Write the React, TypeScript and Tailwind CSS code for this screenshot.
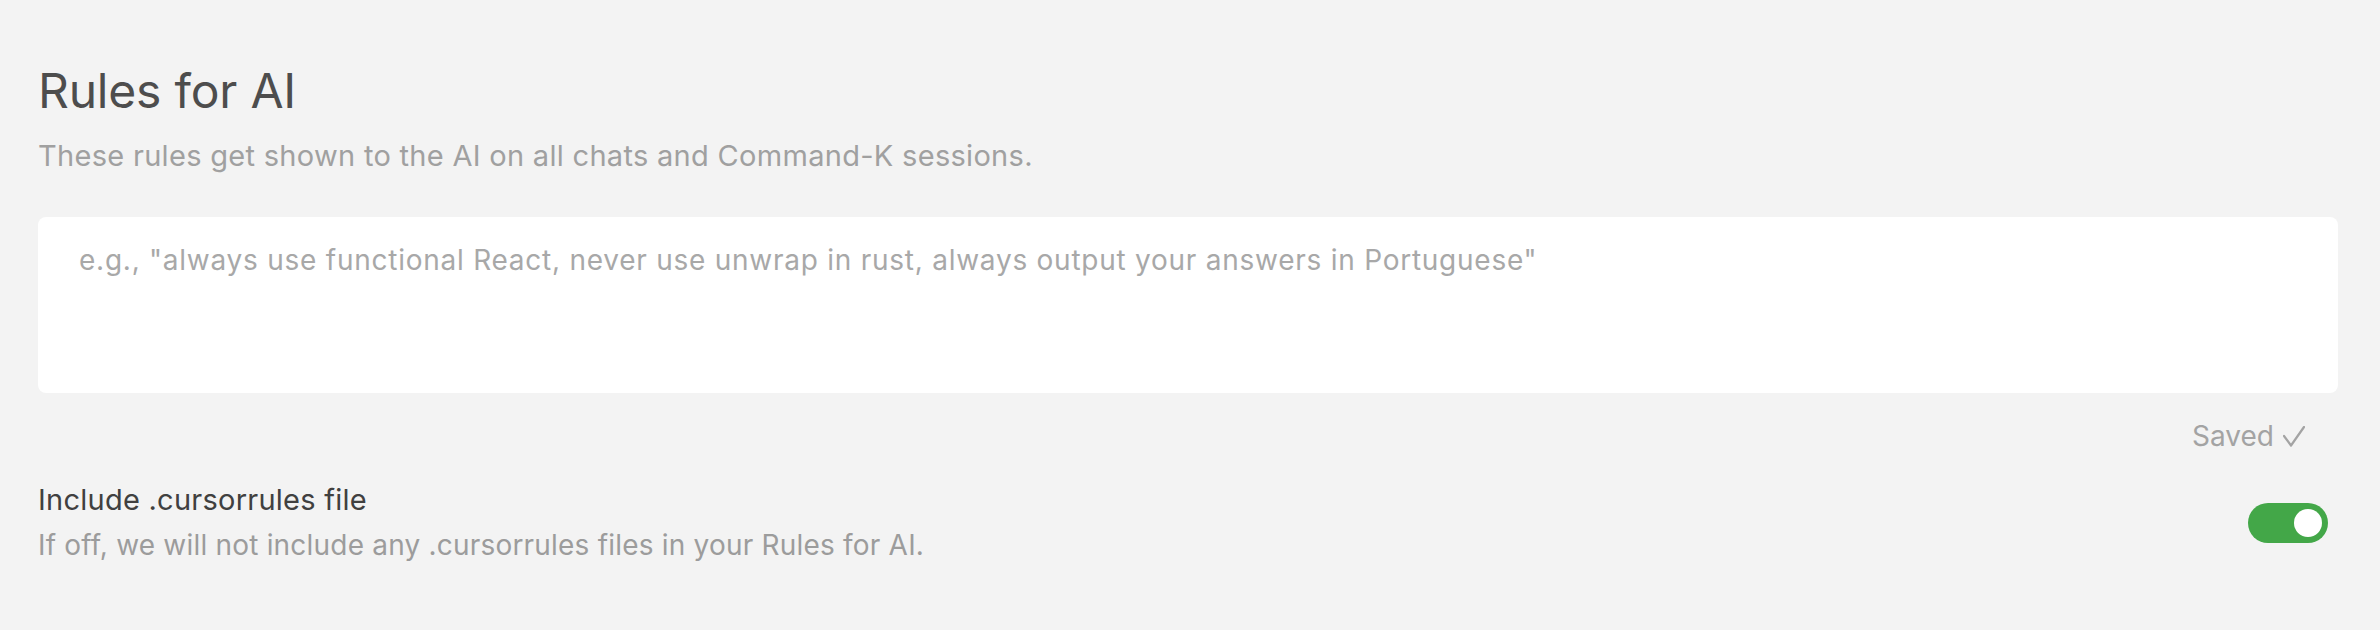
export default function App() {
  return (
    <div
      className="h-[630px] w-full overflow-hidden bg-[#f3f3f3] pl-[38px] pr-[42px] pt-[62px]"
      style={{ fontFamily: "Inter, 'Noto Sans', sans-serif" }}
    >
      <h1 className="text-[48px] leading-[58px] tracking-[-0.2px] text-[#4d4d4d]">Rules for AI</h1>
      <p className="mt-[19px] text-[29px] leading-[34px] tracking-[0.3px] text-[#a0a0a0]">
        These rules get shown to the AI on all chats and Command-K sessions.
      </p>

      {/* rules box */}
      <div className="mt-[44px] h-[176px] rounded-[8px] bg-white pl-[41px] pt-[27px]">
        <div className="text-[28px] leading-[33px] tracking-[0.75px] text-[#a8a8a8]">
          e.g., "always use functional React, never use unwrap in rust, always output your answers in Portuguese"
        </div>
      </div>

      <div className="mt-[26px] flex justify-end pr-[33px]">
        <span className="flex items-baseline gap-[9px] text-[28px] leading-[34px] text-[#a3a3a3]">
          Saved
          <svg width="22" height="21" viewBox="0 0 22 21" className="translate-y-[1px]">
            <polyline points="1,10 8,19.5 21,1" fill="none" stroke="#a3a3a3" strokeWidth="2.2" strokeLinecap="round" strokeLinejoin="round" />
          </svg>
        </span>
      </div>

      <div className="mt-[30px] flex items-center justify-between pr-[10px]">
        <div>
          <div className="text-[29px] leading-[34px] tracking-[0.25px] text-[#404040]">Include .cursorrules file</div>
          <div className="mt-[11px] text-[28px] leading-[34px] tracking-[0.2px] text-[#9c9c9c]">
            If off, we will not include any .cursorrules files in your Rules for AI.
          </div>
        </div>
        <button className="flex h-[40px] w-[80px] items-center justify-end rounded-full bg-[#43a748] px-[6px]">
          <span className="h-[28px] w-[28px] rounded-full bg-white" />
        </button>
      </div>
    </div>
  );
}
